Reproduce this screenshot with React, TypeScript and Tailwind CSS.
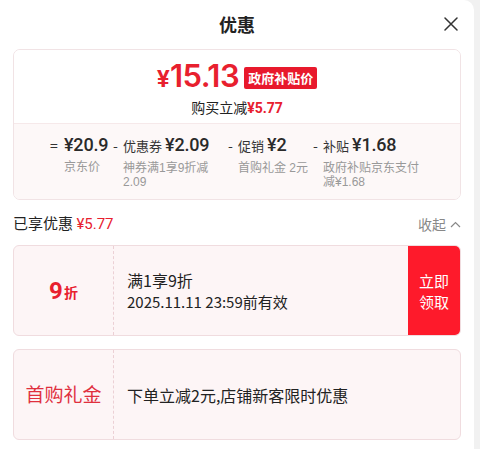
import React from "react";

const CN = { fontFamily: '"Noto Sans CJK SC", "Noto Sans", sans-serif' };
const NUM = { fontFamily: 'Roboto, "Noto Sans CJK SC", sans-serif' };
const LBL = { fontFamily: '"Liberation Sans", "Noto Sans CJK SC", sans-serif' };

function Item({ sign, name, value, label, w, sw }: { sign: string; name?: string; value: string; label: string[]; w: string; sw: string }) {
  return (
    <div className={`flex shrink-0 whitespace-nowrap ${w}`}>
      <div className={`${sw} shrink-0 text-[14px] leading-[26px] text-[#333]`}>{sign}</div>
      <div className="flex flex-col">
        <div className="flex items-baseline gap-[3px] leading-[26px]">
          {name && <span className="text-[13px] text-[#333]">{name}</span>}
          <span className="text-[18px] font-medium tracking-[-0.2px] text-[#2a2a2a]" style={NUM}>{value}</span>
        </div>
        <div className="mt-[2px] flex flex-col text-[12px] leading-[14px] text-[#999]" style={LBL}>
          {label.map((l) => (
            <span key={l}>{l}</span>
          ))}
        </div>
      </div>
    </div>
  );
}

export default function App() {
  return (
    <div className="flex h-[449px] w-[480px] bg-[#f1f1f1]" style={CN}>
      <div className="flex h-full w-[474px] flex-col rounded-tr-[10px] bg-white">
        <div className="relative flex h-[49px] items-center justify-center">
          <span className="text-[18px] font-bold text-[#222]">优惠</span>
          <svg className="absolute right-[16px] top-[17px]" width="14" height="14" viewBox="0 0 14 14">
            <path d="M1 1L13 13M13 1L1 13" stroke="#333" strokeWidth="1.5" strokeLinecap="round" />
          </svg>
        </div>

        <div className="mx-[13px] flex flex-col overflow-hidden rounded-[7px] border border-[#f1e3e5]">
          <div className="flex h-[73px] flex-col items-center bg-white pt-[9px]">
            <div className="flex items-center gap-[5px]">
              <div className="flex items-baseline text-[#e8202e]" style={{ fontFamily: 'Inter, sans-serif' }}>
                <span className="text-[23px] font-bold">¥</span>
                <span className="text-[31px] font-semibold leading-[34px] tracking-[-0.5px]">15.13</span>
              </div>
              <span className="rounded-[2px] bg-[#e8192c] px-[4px] text-[13px] font-bold leading-[22px] text-white">政府补贴价</span>
            </div>
            <div className="text-[14px] leading-[20px] text-[#222]">
              购买立减<span className="font-bold text-[#e8202e]" style={NUM}>¥5.77</span>
            </div>
          </div>
          <div className="flex h-[76px] border-t border-[#f6e9ea] bg-[#fdf8f8] pl-[36px] pt-[8px]">
            <Item sign="=" sw="w-[14px]" value="¥20.9" label={["京东价"]} w="w-[63px]" />
            <Item sign="-" sw="w-[10px]" name="优惠券" value="¥2.09" label={["神券满1享9折减", "2.09"]} w="w-[115px]" />
            <Item sign="-" sw="w-[10px]" name="促销" value="¥2" label={["首购礼金 2元"]} w="w-[85px]" />
            <Item sign="-" sw="w-[10px]" name="补贴" value="¥1.68" label={["政府补贴京东支付", "减¥1.68"]} w="w-[120px]" />
          </div>
        </div>

        <div className="mx-[13px] mt-[13px] flex h-[22px] items-center justify-between">
          <div className="text-[15px] text-[#222]">
            已享优惠 <span className="text-[#e8202e]" style={NUM}>¥5.77</span>
          </div>
          <div className="flex items-center gap-[4px] text-[14px] text-[#888]">
            收起
            <svg width="11" height="7" viewBox="0 0 11 7">
              <path d="M1 6L5.5 1.5L10 6" stroke="#888" strokeWidth="1.2" fill="none" />
            </svg>
          </div>
        </div>

        <div className="mx-[13px] mt-[10px] flex h-[91px] overflow-hidden rounded-[6px] border border-[#f0dcdf] bg-[#fdf5f6]">
          <div className="flex w-[100px] shrink-0 items-center justify-center border-r border-dashed border-[#ecd0d5]">
            <span className="text-[24px] font-bold text-[#e8202e]" style={NUM}>9</span>
            <span className="ml-[1px] mt-[4px] text-[14px] font-bold text-[#e8202e]">折</span>
          </div>
          <div className="flex flex-1 flex-col justify-center pl-[13px] text-[#222]">
            <div className="text-[16px] leading-[21px]">满1享9折</div>
            <div className="text-[15px] leading-[21px]">2025.11.11 23:59前有效</div>
          </div>
          <div className="flex w-[52px] shrink-0 flex-col items-center justify-center bg-[#fe1a2b] text-[15px] leading-[21px] text-white">
            <span>立即</span>
            <span>领取</span>
          </div>
        </div>

        <div className="mx-[13px] mt-[13px] flex h-[91px] overflow-hidden rounded-[6px] border border-[#f0dcdf] bg-[#fdf5f6]">
          <div className="flex w-[100px] shrink-0 items-center justify-center border-r border-dashed border-[#ecd0d5]">
            <span className="text-[19px] text-[#e0303e]">首购礼金</span>
          </div>
          <div className="flex flex-1 items-center pl-[13px] text-[16px] text-[#222]">
            下单立减2元,店铺新客限时优惠
          </div>
        </div>
      </div>
    </div>
  );
}
